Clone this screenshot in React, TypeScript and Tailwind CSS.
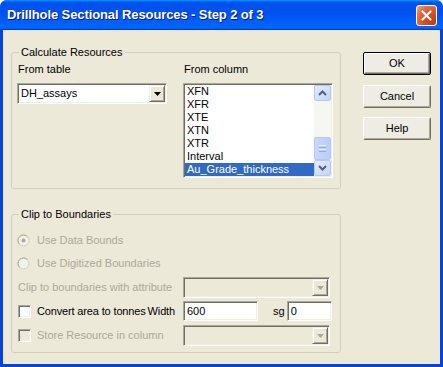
import React from "react";

const sunken =
  "border border-t-[#aca899] border-l-[#aca899] border-r-white border-b-white shadow-[inset_1px_1px_0_#716f64,inset_-1px_-1px_0_#f1efe2]";
const raised =
  "border border-t-[#f1efe2] border-l-[#f1efe2] border-r-[#716f64] border-b-[#716f64] shadow-[inset_1px_1px_0_#fff,inset_-1px_-1px_0_#aca899]";

function Tri({ color }: { color: string }) {
  return (
    <svg width="7" height="4" viewBox="0 0 7 4">
      <polygon points="0,0 7,0 3.5,4" fill={color} />
    </svg>
  );
}

function Combo({ value, disabled, w, className = "" }: { value?: string; disabled?: boolean; w: string; className?: string }) {
  return (
    <div className={`${w} h-[21px] ${sunken} ${disabled ? "bg-[#ece9d8]" : "bg-white"} flex items-stretch p-[1px] ${className}`}>
      <div className="flex-1 pl-[2px] flex items-center leading-[13px]">{value}</div>
      <div className={`w-[16px] ${raised} bg-[#ece9d8] flex items-center justify-center`}>
        <Tri color={disabled ? "#aca899" : "#000"} />
      </div>
    </div>
  );
}

function Chevron({ up }: { up?: boolean }) {
  return (
    <svg width="9" height="6" viewBox="0 0 9 6">
      <polyline
        points={up ? "1,5 4.5,1.5 8,5" : "1,1 4.5,4.5 8,1"}
        fill="none"
        stroke="#4d6185"
        strokeWidth="2"
      />
    </svg>
  );
}

function ScrollBtn({ up }: { up?: boolean }) {
  return (
    <div className="h-[16px] rounded-[2px] border border-[#b5c8f2] bg-[linear-gradient(135deg,#e3ebfd,#c4d5fc)] flex items-center justify-center">
      <Chevron up={up} />
    </div>
  );
}

function Listbox() {
  const items = ["XFN", "XFR", "XTE", "XTN", "XTR", "Interval", "Au_Grade_thickness"];
  return (
    <div className={`w-[150px] h-[95px] ${sunken} bg-white flex p-[1px] mt-[7px]`}>
      <div className="flex-1 flex flex-col">
        {items.map((it, i) => (
          <div
            key={it}
            className={`h-[13px] leading-[13px] pl-[2px] ${i === items.length - 1 ? "bg-[#316ac5] text-white" : ""}`}
          >
            {it}
          </div>
        ))}
      </div>
      <div className="w-[17px] flex flex-col bg-[#f7f7f2]">
        <ScrollBtn up />
        <div className="flex-1" />
        <div className="h-[23px] rounded-[2px] border border-[#b5c8f2] bg-[linear-gradient(90deg,#c9d8fc,#b8cdfa)] flex flex-col items-center justify-center gap-[1px]">
          <div className="w-[7px] h-[1px] bg-[#eef3fe]" />
          <div className="w-[7px] h-[1px] bg-[#8fa8e6]" />
          <div className="w-[7px] h-[1px] bg-[#eef3fe]" />
          <div className="w-[7px] h-[1px] bg-[#8fa8e6]" />
        </div>
        <ScrollBtn />
      </div>
    </div>
  );
}

function Radio({ checked }: { checked?: boolean }) {
  return (
    <svg width="13" height="13" viewBox="0 0 13 13">
      <circle cx="6.5" cy="6.5" r="5.5" fill="#f3f2ea" stroke="#cfcdc0" strokeWidth="1" />
      <path d="M2.6,10.4 A5.5,5.5 0 0,1 10.4,2.6" fill="none" stroke="#aca899" strokeWidth="1" />
      {checked && <circle cx="6.5" cy="6.5" r="2" fill="#aca899" />}
    </svg>
  );
}

function Check({ disabled }: { disabled?: boolean }) {
  return <div className={`w-[13px] h-[13px] ${sunken} ${disabled ? "bg-[#ece9d8]" : "bg-white"}`} />;
}

function Button({ label, def, className = "" }: { label: string; def?: boolean; className?: string }) {
  return (
    <div
      className={`w-[68px] h-[23px] rounded-[2px] flex items-center justify-center bg-[#efede3] ${
        def
          ? "border border-black shadow-[inset_1px_1px_0_#fff,inset_-1px_-1px_0_#716f64,inset_-2px_-2px_0_#aca899]"
          : "border border-t-white border-l-white border-r-[#716f64] border-b-[#716f64] shadow-[inset_-1px_-1px_0_#aca899]"
      } ${className}`}
    >
      {label}
    </div>
  );
}

export default function App() {
  const dis = "text-[#aca899]";
  return (
    <div className="w-[443px] h-[367px] flex flex-col rounded-t-[7px] overflow-hidden bg-[#0842d8] font-['Liberation_Sans',Arial,sans-serif] text-[11px] text-black">
      {/* Title bar */}
      <div className="h-[30px] shrink-0 flex items-center pl-[7px] pr-[6px] bg-[linear-gradient(180deg,#0997ff,#0053ee_8%,#0050ee_40%,#0066ff_88%,#0066ff_93%,#005bff_95%,#003dd7_96%,#003dd7)]">
        <div className="flex-1 text-white font-bold text-[13px] leading-[16px] tracking-[-0.1px] [text-shadow:1px_1px_#0a1883]">
          Drillhole Sectional Resources - Step 2 of 3
        </div>
        <div className="w-[21px] h-[21px] rounded-[3px] border border-white bg-[radial-gradient(circle_at_85%_85%,#c43c12_0%,#d9562a_50%,#e27553_75%,#f3b49c_100%)] flex items-center justify-center">
          <svg width="11" height="11" viewBox="0 0 11 11">
            <path d="M1.5,1.5 L9.5,9.5 M9.5,1.5 L1.5,9.5" stroke="#fff" strokeWidth="2.2" strokeLinecap="round" />
          </svg>
        </div>
      </div>

      {/* Client */}
      <div className="flex-1 mx-[3px] mb-[3px] bg-[#ece9d8] flex">
        <div className="flex flex-col pl-[8px] pt-[16px]">
          <fieldset className="w-[330px] h-[143px] border border-[#d0d0bf] rounded-[3px]">
            <legend className="ml-[7px] px-[2px] leading-[13px]">Calculate Resources</legend>
            <div className="flex mt-[4px] pl-[5px]">
              <div className="w-[150px] flex flex-col">
                <div className="h-[13px] leading-[13px] pl-[1px]">From table</div>
                <Combo value="DH_assays" w="w-[150px]" className="mt-[7px]" />
              </div>
              <div className="ml-[16px] flex flex-col">
                <div className="h-[13px] leading-[13px] pl-[1px]">From column</div>
                <Listbox />
              </div>
            </div>
          </fieldset>

          <fieldset className="w-[330px] h-[145px] mt-[19px] border border-[#d0d0bf] rounded-[3px]">
            <legend className="ml-[7px] px-[2px] leading-[13px]">Clip to Boundaries</legend>
            <div className="flex flex-col pl-[5px]">
              <div className="mt-[8px] h-[22px] flex items-center">
                <Radio checked />
                <span className={`ml-[7px] ${dis}`}>Use Data Bounds</span>
              </div>
              <div className="mt-[1px] h-[22px] flex items-center">
                <Radio />
                <span className={`ml-[7px] ${dis}`}>Use Digitized Boundaries</span>
              </div>
              <div className="mt-[3px] h-[21px] flex items-center">
                <div className={`w-[166px] pl-[1px] ${dis}`}>Clip to boundaries with attribute</div>
                <Combo disabled w="w-[147px]" />
              </div>
              <div className="mt-[3px] h-[20px] flex items-center">
                <div className="w-[166px] flex items-center pl-[1px] tracking-[-0.15px]">
                  <Check />
                  <span className="ml-[6px]">Convert area to tonnes</span>
                  <span className="ml-[2px]">Width</span>
                </div>
                <div className={`w-[75px] h-[20px] ${sunken} bg-white flex items-center pl-[3px]`}>600</div>
                <span className="ml-[15px]">sg</span>
                <div className={`ml-[2px] w-[45px] h-[20px] ${sunken} bg-white flex items-center pl-[3px]`}>0</div>
              </div>
              <div className="mt-[4px] h-[21px] flex items-center">
                <div className="w-[166px] flex items-center pl-[1px]">
                  <Check disabled />
                  <span className={`ml-[6px] ${dis}`}>Store Resource in column</span>
                </div>
                <Combo disabled w="w-[147px]" />
              </div>
            </div>
          </fieldset>
        </div>

        <div className="flex flex-col ml-[22px] pt-[22px]">
          <Button label="OK" def />
          <Button label="Cancel" className="mt-[10px]" />
          <Button label="Help" className="mt-[9px]" />
        </div>
      </div>
    </div>
  );
}
